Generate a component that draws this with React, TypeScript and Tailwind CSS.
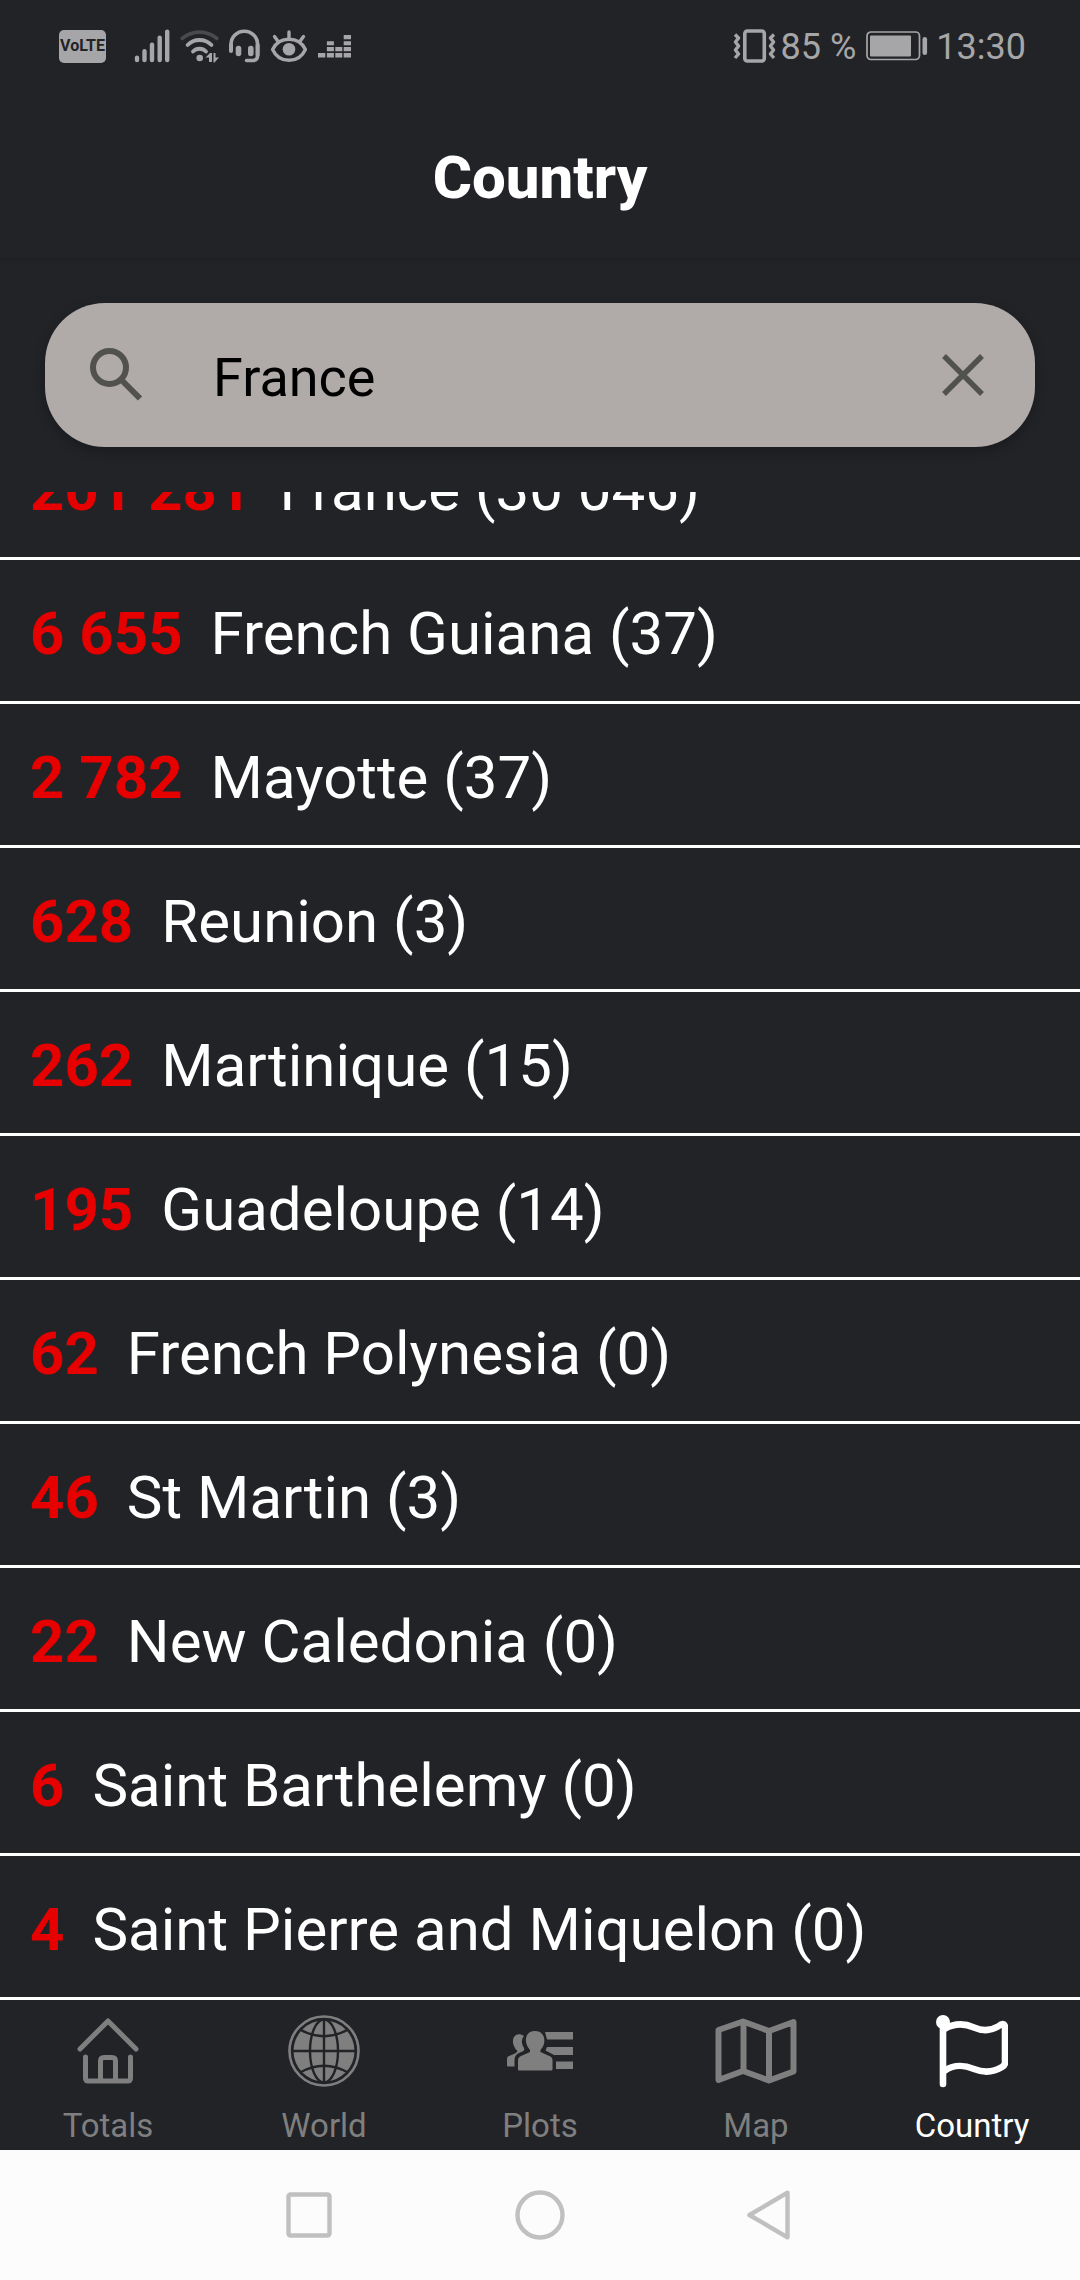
import { useState } from "react";
import type { ReactNode } from "react";

type Row = { cases: string; label: string };

const rows: Row[] = [
  { cases: "201 281", label: "France (30 046)" },
  { cases: "6 655", label: "French Guiana (37)" },
  { cases: "2 782", label: "Mayotte (37)" },
  { cases: "628", label: "Reunion (3)" },
  { cases: "262", label: "Martinique (15)" },
  { cases: "195", label: "Guadeloupe (14)" },
  { cases: "62", label: "French Polynesia (0)" },
  { cases: "46", label: "St Martin (3)" },
  { cases: "22", label: "New Caledonia (0)" },
  { cases: "6", label: "Saint Barthelemy (0)" },
  { cases: "4", label: "Saint Pierre and Miquelon (0)" },
];

function SignalIcon() {
  return (
    <svg width="36" height="34" viewBox="0 0 36 34" stroke="currentColor" strokeWidth="4.4" strokeLinecap="round" aria-hidden="true">
      <path d="M3 28.8V31M10.5 22.2V31M18 15.6V31M25.7 8.6V31M33.2 2.6V31" />
    </svg>
  );
}

function WifiIcon() {
  return (
    <svg width="39" height="34" viewBox="0 0 39 34" fill="none" stroke="currentColor" strokeWidth="3.8" strokeLinecap="round" aria-hidden="true">
      <path d="M2.3 9.4C12.5 1 26.5 1 36.8 9.4" opacity=".3" />
      <path d="M7.6 16C14 9.3 25 9.3 31.5 16" />
      <path d="M13 22.5C16.5 18.8 22.5 18.8 26 22.5" />
      <circle cx="19.7" cy="29" r="3.3" fill="currentColor" stroke="none" />
      <path d="M25.5 28.5L30 24H32V33H29V28.500ZM33.500 24H35.500V28.500H39L34.500 33.500H33.500Z" fill="currentColor" stroke="none" />
    </svg>
  );
}

function HeadsetIcon() {
  return (
    <svg width="31" height="34" viewBox="0 0 31 34" fill="none" stroke="currentColor" strokeLinecap="round" aria-hidden="true">
      <path d="M2 21V15.5A13.3 13.3 0 0 1 28.6 15.5V26.500Q28.600 31.500 23.600 31.500H17.500" strokeWidth="3.600" />
      <path d="M2 16V22M28.600 16V26" strokeWidth="4" />
      <path d="M9.500 19.500V24.500M21.800 19.500V24.500" strokeWidth="5.600" />
    </svg>
  );
}

function EyeIcon() {
  return (
    <svg width="38" height="34" viewBox="0 0 38 34" fill="none" stroke="currentColor" strokeWidth="3.4" strokeLinecap="round" strokeLinejoin="round" aria-hidden="true">
      <path d="M2.600 20.500C6 13.500 12 10.300 19 10.300S32 13.500 35.400 20.500C32 28 26 31.300 19 31.300S6 28 2.600 20.500Z" />
      <circle cx="19" cy="20.300" r="6.300" fill="currentColor" stroke="none" />
      <path d="M19 10V3M8.500 13L4.500 7.500M29.500 13L33.500 7.500" />
    </svg>
  );
}

function EqualizerIcon() {
  return (
    <svg width="34" height="34" viewBox="0 0 34 34" fill="currentColor" aria-hidden="true">
      <path d="M0 24h7.300v4.500H0zM8.900 24h7v4.500h-7zM17.300 24h7v4.500h-7zM25.700 24H33v4.500h-7.300zM8.900 18h7v4.300h-7zM17.300 18h7v4.300h-7zM25.700 18H33v4.300h-7.300zM8.900 12.300h7v4h-7zM25.700 12.300H33v4h-7.300zM25.700 6H33v4.300h-7.300z" />
    </svg>
  );
}

function VibrateIcon() {
  return (
    <svg width="44" height="34" viewBox="0 0 44 34" fill="none" stroke="currentColor" strokeWidth="3.6" aria-hidden="true">
      <rect x="11.800" y="2" width="19.500" height="30" rx="2.500" />
      <path d="M2 5.500l3.500 3.500-3 4 3 4-3 4 3 4-3.500 4M41 5.500l-3.500 3.500 3 4-3 4 3 4-3 4 3.500 4" strokeWidth="3.400" strokeLinejoin="round" />
    </svg>
  );
}

function BatteryIcon() {
  return (
    <svg width="62" height="30" viewBox="0 0 62 30" fill="none" stroke="currentColor" aria-hidden="true">
      <rect x="1" y="1" width="52.500" height="27.500" rx="4" strokeWidth="1.700" />
      <rect x="4" y="4.500" width="41" height="21" rx="1" fill="currentColor" stroke="none" />
      <rect x="56.500" y="6" width="4.600" height="18" rx="2.300" fill="currentColor" stroke="none" />
    </svg>
  );
}

function StatusBar() {
  return (
    <div className="flex h-[92px] items-center justify-between pr-[54px] pl-[59px] text-[#a6a6a8]">
      <div className="flex items-center">
        <span className="mr-7 flex h-[33px] w-[47px] items-center justify-center rounded-[5px] bg-[#a6a6a8] text-[16px] font-bold text-[#222327]">
          VoLTE
        </span>
        <div className="flex items-center gap-2.5">
          <SignalIcon />
          <WifiIcon />
          <HeadsetIcon />
          <EyeIcon />
          <EqualizerIcon />
        </div>
      </div>
      <div className="flex items-center text-[36px] leading-[42px]">
        <VibrateIcon />
        <span className="mr-2.5 ml-1 pt-0.5">85 %</span>
        <BatteryIcon />
        <span className="ml-2 pt-0.5">13:30</span>
      </div>
    </div>
  );
}

function HomeIcon() {
  return (
    <svg width="62" height="66" viewBox="0 0 62 66" fill="none" stroke="currentColor" strokeWidth="5" strokeLinecap="round" strokeLinejoin="round" aria-hidden="true">
      <path d="M3 31L31 3L59 31" />
      <path d="M8.500 39V60Q8.500 63 11.500 63H50.500Q53.500 63 53.500 60V39" />
      <path d="M23.500 62V43Q23.500 39.500 27 39.500H35Q38.500 39.500 38.500 43V62" />
    </svg>
  );
}

function WorldIcon() {
  return (
    <svg width="72" height="72" viewBox="0 0 72 72" fill="none" aria-hidden="true">
      <circle cx="36" cy="36" r="34.500" stroke="currentColor" strokeWidth="2.600" />
      <circle cx="36" cy="36" r="30.500" fill="currentColor" />
      <g stroke="#222327" strokeWidth="2.400">
        <path d="M36 4V68M4 36H68" />
        <ellipse cx="36" cy="36" rx="14" ry="31.500" />
        <path d="M12 14.500Q36 28 60 14.500M12 57.500Q36 44 60 57.500" />
      </g>
    </svg>
  );
}

function PlotsIcon() {
  return (
    <svg width="68" height="42" viewBox="0 0 68 42" fill="currentColor" aria-hidden="true">
      <path d="M18 6C11 1 5 7 7.500 15Q9 19 11.500 21L10 23L2 26.500Q1 27 1 29V35.500Q1 36.500 2 36.500H8.500V30Q8.500 25.500 12 23.500L17.500 21Q19 19 17.500 17C15 13 15.500 9 18 6Z" />
      <path d="M29 1C21.500 1 18.500 7 20.500 14Q21.500 17.500 24 20V22L14 26.500Q12 27.500 12 30V39.500Q12 40.500 13 40.500H45Q46.500 40.500 46.500 39V30Q46.500 27.500 44.500 26.500L34.500 22V20Q37 17.500 38 14C39.500 7 36.500 1 29 1Z" />
      <path d="M39 2H67V9.500H41ZM41 17H67V25H48L39.500 20.500ZM50 31.500H67V39H50Z" />
    </svg>
  );
}

function MapIcon() {
  return (
    <svg width="82" height="66" viewBox="0 0 82 66" fill="none" stroke="currentColor" strokeWidth="6" strokeLinejoin="round" aria-hidden="true">
      <path d="M3.500 12L28 3.500L54 13L78.500 4V53.500L54 62.500L28 53L3.500 62Z" />
      <path d="M28.500 4V53M54 13V62" />
    </svg>
  );
}

function FlagIcon() {
  return (
    <svg width="72" height="74" viewBox="0 0 72 74" fill="none" stroke="currentColor" strokeWidth="6.600" strokeLinecap="round" strokeLinejoin="round" aria-hidden="true">
      <circle cx="7" cy="8" r="7" fill="currentColor" stroke="none" />
      <path d="M7 8V70" />
      <path d="M9 14.500C20 8.500 29 9.500 38 13.500S56 16 62 12.500Q69 7 69 14V49Q69 51 66 53C58 58 48 59 38 55S19 50 9 56.500" />
    </svg>
  );
}

const tabs: { label: string; icon: ReactNode; active?: boolean }[] = [
  { label: "Totals", icon: <HomeIcon /> },
  { label: "World", icon: <WorldIcon /> },
  { label: "Plots", icon: <PlotsIcon /> },
  { label: "Map", icon: <MapIcon /> },
  { label: "Country", icon: <FlagIcon />, active: true },
];

function TabBar() {
  return (
    <nav className="grid h-[150px] shrink-0 grid-cols-5" aria-label="Sections">
      {tabs.map((tab) => (
        <button
          key={tab.label}
          type="button"
          aria-current={tab.active ? "page" : undefined}
          className={`flex flex-col items-center gap-1 ${tab.active ? "text-white" : "text-[#7f7f7f]"}`}
        >
          <span className="flex h-[102px] items-center justify-center">{tab.icon}</span>
          <span className="text-[33px] leading-[40px]">{tab.label}</span>
        </button>
      ))}
    </nav>
  );
}

function SystemNav() {
  return (
    <div className="flex h-[130px] shrink-0 items-center justify-center gap-[182px] bg-[#fcfcfc] text-[#c0c0c0]">
      <button type="button" aria-label="Recent apps">
        <svg width="50" height="50" viewBox="0 0 50 50" fill="none" stroke="currentColor" strokeWidth="4.4" aria-hidden="true">
          <rect x="5.500" y="4.500" width="41" height="41" rx="2" />
        </svg>
      </button>
      <button type="button" aria-label="Home">
        <svg width="50" height="50" viewBox="0 0 50 50" fill="none" stroke="currentColor" strokeWidth="4.4" aria-hidden="true">
          <circle cx="25" cy="25" r="22.500" />
        </svg>
      </button>
      <button type="button" aria-label="Back">
        <svg width="50" height="50" viewBox="0 0 50 50" fill="none" stroke="currentColor" strokeWidth="4.4" strokeLinejoin="round" aria-hidden="true">
          <path d="M40.500 2.700V47.300L2.400 25Z" />
        </svg>
      </button>
    </div>
  );
}

export default function App() {
  const [query, setQuery] = useState("France");

  return (
    <div className="flex h-screen flex-col bg-[#222327] font-['Roboto',sans-serif] text-white">
      <header className="h-[258px] shrink-0 shadow-[0_1px_4px_rgba(0,0,0,0.15)]">
        <StatusBar />
        <h1 className="pt-[51px] text-center text-[60px] leading-[70px] font-extrabold">Country</h1>
      </header>

      <div className="shrink-0 px-[45px] pt-[45px] pb-[45px]">
        <label className="flex h-[144px] items-center rounded-[60px] bg-[#b0aaa9] pr-[50px] pl-[44px] text-[#51514e] shadow-[0_4px_12px_rgba(0,0,0,0.25)]">
          <svg width="54" height="54" viewBox="0 0 54 54" fill="none" stroke="currentColor" strokeWidth="6" aria-hidden="true">
            <circle cx="20.500" cy="19.500" r="16.500" />
            <path d="M33.500 33L51 50.500" />
          </svg>
          <input
            type="text"
            aria-label="Search country"
            value={query}
            onChange={(e) => setQuery(e.target.value)}
            className="ml-[70px] min-w-0 flex-1 bg-transparent pt-1.5 text-[54px] leading-[64px] text-black outline-none"
          />
          <button type="button" aria-label="Clear search" onClick={() => setQuery("")}>
            <svg width="44" height="44" viewBox="0 0 44 44" fill="none" stroke="currentColor" strokeWidth="5.4" aria-hidden="true">
              <path d="M3 3L41 41M41 3L3 41" />
            </svg>
          </button>
        </label>
      </div>

      <main className="flex min-h-0 flex-1 flex-col justify-end overflow-hidden">
        <ul className="shrink-0">
          {rows.map((row) => (
            <li key={row.label} className="flex gap-7 border-b-[3px] border-white px-[30px] pt-[39px] pb-8 text-[60px] leading-[70px] whitespace-nowrap">
              <span className="font-bold text-[#e60000]">{row.cases}</span>
              <span>{row.label}</span>
            </li>
          ))}
        </ul>
      </main>

      <TabBar />
      <SystemNav />
    </div>
  );
}
